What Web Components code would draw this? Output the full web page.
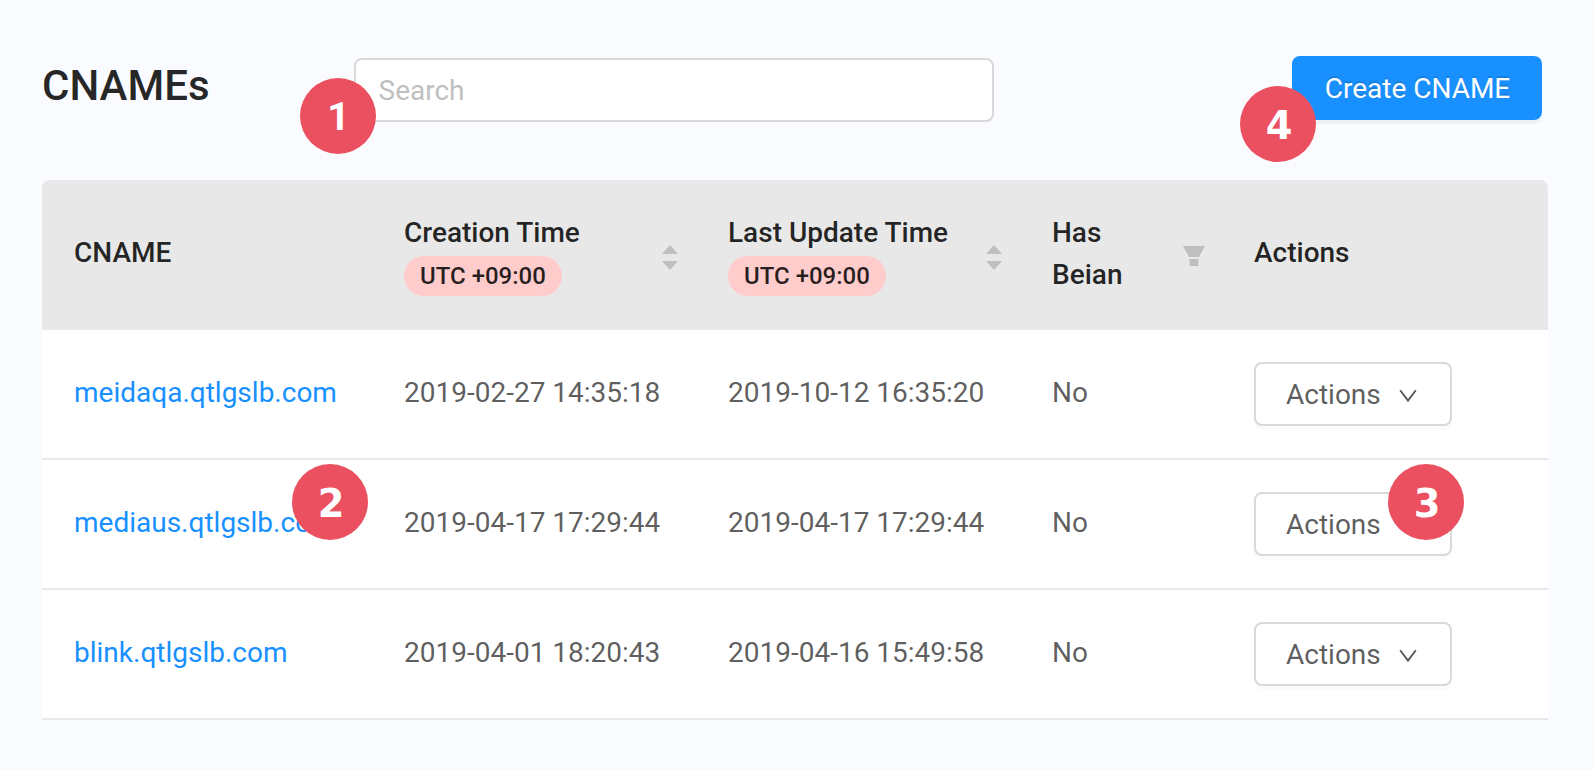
<!DOCTYPE html>
<html lang="en">
<head>
<meta charset="utf-8">
<title>CNAMEs</title>
<style>
body{margin:0;background:#fafbff;font-family:Roboto,sans-serif;font-size:28px;line-height:42px;color:rgba(0,0,0,.65)}
</style>
</head>
<body>
<cname-page></cname-page>
<script>
function define(name, html) {
  const t = document.createElement('template');
  t.innerHTML = html;
  customElements.define(name, class extends HTMLElement {
    constructor() {
      super();
      this.attachShadow({mode: 'open'}).append(t.content.cloneNode(true));
    }
  });
}

define('step-badge', `<style>
:host{position:absolute;z-index:2;box-sizing:border-box;width:76px;height:76px;padding:3px 0 0 2px;border-radius:50%;background:#eb5060;color:#fff;display:flex;align-items:center;justify-content:center;font:700 38.4px/46px "DejaVu Sans",sans-serif}
:host([narrow]){font:700 39.4px/46px Roboto,sans-serif;padding:2px 0 0 1px}
</style><slot></slot>`);

define('search-box', `<style>
:host{display:block;width:640px}
input{display:block;box-sizing:border-box;width:100%;height:64px;border:2px solid #d9d9d9;border-radius:8px;padding:0 22.5px;background:#fff;font:inherit;outline:none}
input::placeholder{color:#bfbfbf;opacity:1}
</style><input placeholder="Search">`);

define('primary-button', `<style>
:host{display:block}
button{box-sizing:border-box;width:250px;height:64px;border:0;border-radius:8px;background:#1890ff;color:#fff;font:inherit;padding:2px 0 0 1px;text-shadow:0 -2px 0 rgba(0,0,0,.12);box-shadow:0 4px 0 rgba(0,0,0,.045);display:block}
</style><button><slot></slot></button>`);

define('action-button', `<style>
:host{display:block}
button{box-sizing:border-box;width:198px;height:64px;border:2px solid #d9d9d9;border-radius:8px;background:#fff;color:inherit;font:inherit;padding:2px 0 0 30px;box-shadow:0 4px 0 rgba(0,0,0,.015);display:flex;align-items:center;gap:18px}
svg{display:block;margin-top:2px}
</style><button><slot></slot><svg width="18" height="14" viewBox="0 0 18 14"><path d="M1.2 1.2 9 11.6 16.8 1.2" fill="none" stroke="#595959" stroke-width="1.9"/></svg></button>`);

define('time-title', `<style>
:host{display:flex;justify-content:space-between;width:100%}
.tag{display:block;width:max-content;box-sizing:border-box;height:40px;margin-top:2px;padding:0 16px;border-radius:20px;background:#ffcccc;font-size:24px;line-height:41px}
svg{display:block;margin:33px -14px 0 0}
</style><div><slot></slot><span class="tag">UTC +09:00</span></div>
<svg width="16" height="26" viewBox="0 0 16 26"><path d="M0 9 8 0l8 9zM0 16h16l-8 9z" fill="#bfbfbf"/></svg>`);

define('filter-title', `<style>
:host{display:flex;justify-content:space-between;width:100%}
.t{width:90px}
svg{display:block;margin:34px -15px 0 0}
</style><div class="t"><slot></slot></div>
<svg width="22" height="20" viewBox="0 0 22 20"><path d="M.6 0h20.8q.6 0 .3.7L16 11H6L.3.7Q0 0 .6 0zM6.6 13h8.8v6.3q0 .7-.7.7H7.3q-.7 0-.7-.7z" fill="#bfbfbf"/></svg>`);

define('table-head', `<style>
:host{display:grid;grid-template-columns:330px 324px 324px 202px 326px;box-sizing:border-box;height:150px;background:#e8e8e8;border-radius:8px 8px 0 0;color:rgba(0,0,0,.85);font-weight:500}
div{padding:32px 32px 0}
.mid{padding-top:52px}
</style><div class="mid">CNAME</div><div><time-title>Creation Time</time-title></div><div><time-title>Last Update Time</time-title></div><div><filter-title>Has Beian</filter-title></div><div class="mid">Actions</div>`);

define('table-row', `<style>
:host{display:grid;grid-template-columns:330px 324px 324px 202px 326px;box-sizing:border-box;height:130px;background:#fff;border-bottom:2px solid #e8e8e8}
div{padding:42px 32px 0;white-space:nowrap}
.link{color:#1890ff}
.act{padding-top:32px}
</style><div class="link"><slot name="name"></slot></div><div><slot name="created"></slot></div><div><slot name="updated"></slot></div><div>No</div><div class="act"><action-button>Actions</action-button></div>`);

define('cname-page', `<style>
:host{display:block;position:relative;box-sizing:border-box;height:770px;padding:56px 46px 0 42px}
header{display:flex;align-items:flex-start;height:124px}
h1{margin:0;width:312px;font-size:42px;line-height:60px;font-weight:500;color:rgba(0,0,0,.85)}
search-box{margin-top:2px}
primary-button{margin:0 6px 0 auto}
</style>
<header><h1>CNAMEs</h1><search-box></search-box><primary-button>Create CNAME</primary-button></header>
<table-head></table-head>
<table-row><span slot="name">meidaqa.qtlgslb.com</span><span slot="created">2019-02-27 14:35:18</span><span slot="updated">2019-10-12 16:35:20</span></table-row>
<table-row><span slot="name">mediaus.qtlgslb.com</span><span slot="created">2019-04-17 17:29:44</span><span slot="updated">2019-04-17 17:29:44</span></table-row>
<table-row><span slot="name">blink.qtlgslb.com</span><span slot="created">2019-04-01 18:20:43</span><span slot="updated">2019-04-16 15:49:58</span></table-row>
<step-badge narrow style="left:300px;top:78px">1</step-badge>
<step-badge style="left:292px;top:464px">2</step-badge>
<step-badge style="left:1388px;top:464px">3</step-badge>
<step-badge style="left:1240px;top:86px">4</step-badge>`);
</script>
</body>
</html>
